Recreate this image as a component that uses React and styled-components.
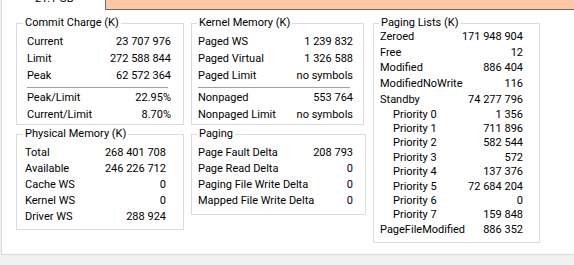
import styled, { createGlobalStyle } from "styled-components";

const GlobalStyle = createGlobalStyle`
  html, body {
    margin: 0;
    padding: 0;
    background: #f0f0f0;
  }
  body {
    font-family: Roboto, "Liberation Sans", Arial, sans-serif;
    font-size: 11px;
    color: #000;
  }
`;

const Window = styled.div`
  box-sizing: border-box;
  width: 573px;
  height: 255px;
  margin-left: 1px;
  background: #fff;
  border-left: 1px solid #d9d9d9;
  border-bottom: 1px solid #d9d9d9;
  overflow: hidden;
  display: flex;
  flex-direction: column;
`;

const TopStrip = styled.div`
  display: flex;
  height: 10px;
  flex-shrink: 0;
`;

const Caption = styled.div`
  width: 103px;
  padding-left: 33px;
  box-sizing: border-box;
  margin-top: -8px;
  line-height: 14px;
`;

const UsageBar = styled.div`
  flex: 1;
  height: 9px;
  background: #fdc7a6;
  border-left: 1px solid #6e6e6e;
  border-bottom: 1px solid #6e6e6e;
`;

const Columns = styled.div`
  display: flex;
  align-items: flex-start;
  margin-top: 13px;
  padding-left: 14px;
`;

const Column = styled.div`
  display: flex;
  flex-direction: column;
  gap: 9px;
  width: ${(p) => p.$w}px;
  margin-right: ${(p) => p.$gap || 0}px;
`;

const Group = styled.div`
  position: relative;
  border: 1px solid #dcdcdc;
  padding: ${(p) => p.$pt}px ${(p) => p.$pr}px ${(p) => p.$pb}px ${(p) => p.$pl}px;
  margin-right: ${(p) => p.$mr || 0}px;
`;

const GroupTitle = styled.span`
  position: absolute;
  top: -8px;
  left: ${(p) => p.$x || 5}px;
  padding: 0 2px;
  background: #fff;
  line-height: 14px;
`;

const Row = styled.div`
  display: flex;
  justify-content: space-between;
  align-items: center;
  height: ${(p) => p.$h}px;
  padding-left: ${(p) => (p.$sub ? 13 : 0)}px;
  white-space: nowrap;
`;

const Value = styled.span`
  text-align: right;
`;

const Divider = styled.div`
  height: 1px;
  background: #a0a0a0;
  margin: 3px 3px 1px 0;
`;

const commit = [
  ["Current", "23 707 976"],
  ["Limit", "272 588 844"],
  ["Peak", "62 572 364"],
];
const commitRatio = [
  ["Peak/Limit", "22.95%"],
  ["Current/Limit", "8.70%"],
];
const physical = [
  ["Total", "268 401 708"],
  ["Available", "246 226 712"],
  ["Cache WS", "0"],
  ["Kernel WS", "0"],
  ["Driver WS", "288 924"],
];
const kernel = [
  ["Paged WS", "1 239 832"],
  ["Paged Virtual", "1 326 588"],
  ["Paged Limit", "no symbols"],
];
const kernelNonpaged = [
  ["Nonpaged", "553 764"],
  ["Nonpaged Limit", "no symbols"],
];
const paging = [
  ["Page Fault Delta", "208 793"],
  ["Page Read Delta", "0"],
  ["Paging File Write Delta", "0"],
  ["Mapped File Write Delta", "0"],
];
const lists = [
  ["Zeroed", "171 948 904"],
  ["Free", "12"],
  ["Modified", "886 404"],
  ["ModifiedNoWrite", "116"],
  ["Standby", "74 277 796"],
];
const priorities = [
  "1 356",
  "711 896",
  "582 544",
  "572",
  "137 376",
  "72 684 204",
  "0",
  "159 848",
];

const Rows = ({ items, h, sub }) =>
  items.map(([label, value]) => (
    <Row key={label} $h={h} $sub={sub}>
      <span>{label}</span>
      <Value>{value}</Value>
    </Row>
  ));

export default function App() {
  return (
    <>
      <GlobalStyle />
      <Window>
        <TopStrip>
          <Caption>21.1 GB</Caption>
          <UsageBar />
        </TopStrip>

        <Columns>
          <Column $w={168} $gap={7}>
            <Group $pt={9} $pr={12} $pb={1} $pl={10}>
              <GroupTitle $x={6}>Commit Charge (K)</GroupTitle>
              <Rows items={commit} h={17} />
              <Divider />
              <Rows items={commitRatio} h={17} />
            </Group>
            <Group $pt={9} $pr={17} $pb={5} $pl={8}>
              <GroupTitle $x={6}>Physical Memory (K)</GroupTitle>
              <Rows items={physical} h={16} />
            </Group>
          </Column>

          <Column $w={175} $gap={7}>
            <Group $pt={9} $pr={10} $pb={1} $pl={6} $mr={2}>
              <GroupTitle>Kernel Memory (K)</GroupTitle>
              <Rows items={kernel} h={17} />
              <Divider />
              <Rows items={kernelNonpaged} h={17} />
            </Group>
            <Group $pt={9} $pr={12} $pb={6} $pl={6}>
              <GroupTitle>Paging</GroupTitle>
              <Rows items={paging} h={16} />
            </Group>
          </Column>

          <Column $w={167}>
            <Group $pt={5} $pr={16} $pb={6} $pl={6}>
              <GroupTitle>Paging Lists (K)</GroupTitle>
              <Rows items={lists} h={15.6} />
              <Rows
                items={priorities.map((v, i) => [`Priority ${i}`, v])}
                h={14.4}
                sub
              />
              <Rows items={[["PageFileModified", "886 352"]]} h={14.4} />
            </Group>
          </Column>
        </Columns>
      </Window>
    </>
  );
}
